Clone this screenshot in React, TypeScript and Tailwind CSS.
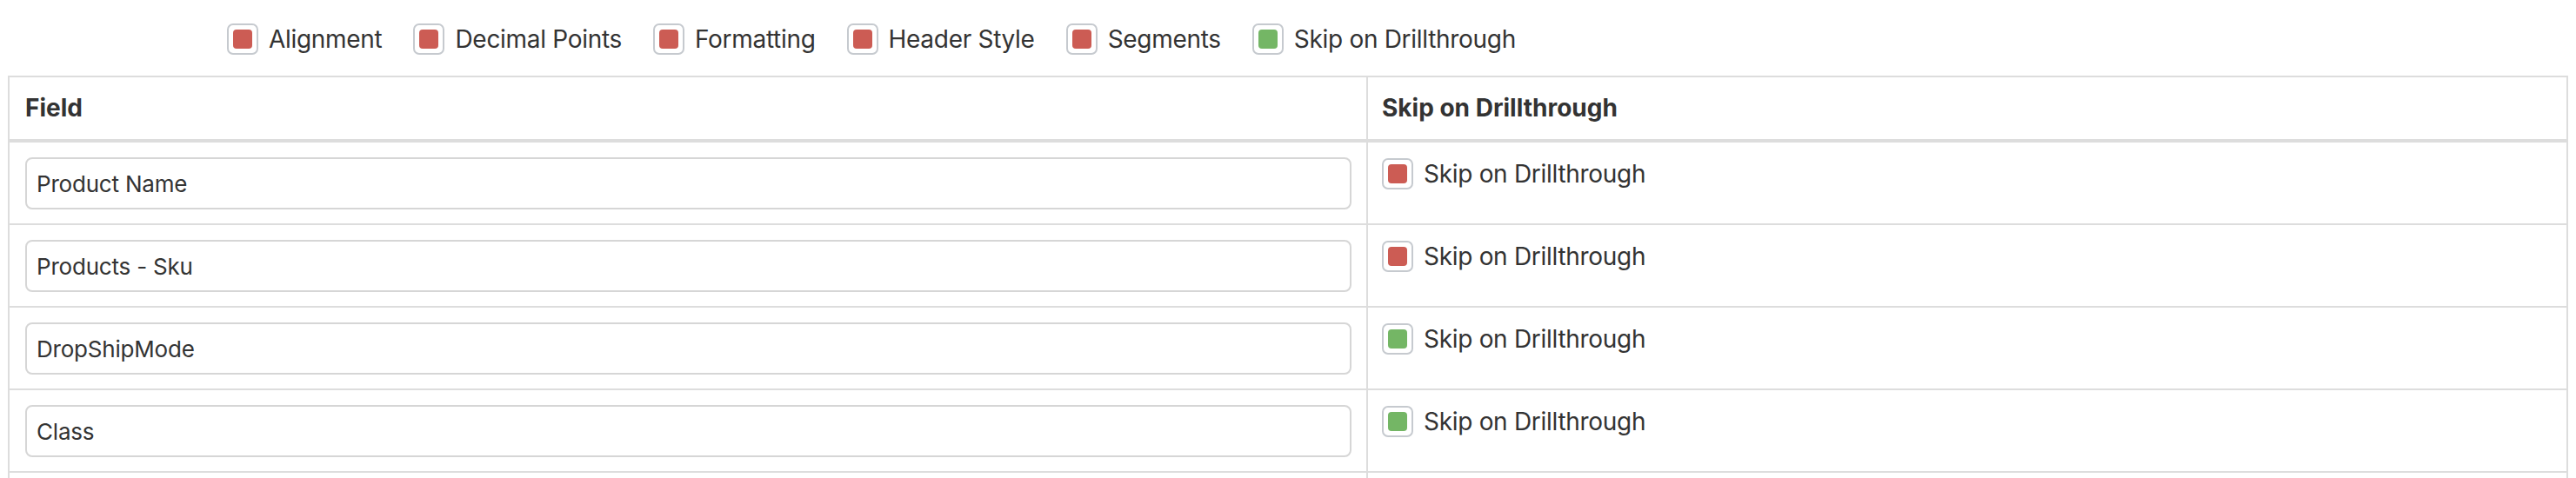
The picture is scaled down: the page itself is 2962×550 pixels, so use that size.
import React from 'react';

type Tone = 'red' | 'green';

const legend: { label: string; tone: Tone }[] = [
  { label: 'Alignment', tone: 'red' },
  { label: 'Decimal Points', tone: 'red' },
  { label: 'Formatting', tone: 'red' },
  { label: 'Header Style', tone: 'red' },
  { label: 'Segments', tone: 'red' },
  { label: 'Skip on Drillthrough', tone: 'green' },
];

const rows: { field: string; tone: Tone }[] = [
  { field: 'Product Name', tone: 'red' },
  { field: 'Products - Sku', tone: 'red' },
  { field: 'DropShipMode', tone: 'green' },
  { field: 'Class', tone: 'green' },
];

function Box({ tone }: { tone: Tone }) {
  return (
    <span className="flex h-[36px] w-[36px] shrink-0 items-center justify-center rounded-[7px] border-2 border-[#c6cacf] bg-white">
      <span className={`h-[22px] w-[22px] rounded-[4px] ${tone === 'red' ? 'bg-[#cc5c54]' : 'bg-[#74b665]'}`} />
    </span>
  );
}

export default function App() {
  return (
    <div className="h-[550px] overflow-hidden bg-white text-[#333333] font-['Inter','Noto_Sans',sans-serif]">
      <div className="flex h-[87px] items-start pl-[261px] pt-[27px]">
        {legend.map((l) => (
          <label key={l.label} className="mr-[36px] flex items-center gap-[12px] text-[28px] leading-[36px] tracking-[-0.3px]">
            <Box tone={l.tone} />
            {l.label}
          </label>
        ))}
      </div>

      <div className="mx-[9px] border-x-2 border-t-2 border-[#dddddd]">
        <div className="grid grid-cols-[1562px_1fr] border-b-4 border-[#dddddd]">
          <div className="border-r-2 border-[#dddddd] px-[18px] py-[18px] text-[28px] font-bold leading-[35px]">Field</div>
          <div className="px-[16px] py-[18px] text-[28px] font-bold leading-[35px]">Skip on Drillthrough</div>
        </div>
        {rows.map((r) => (
          <div key={r.field} className="grid grid-cols-[1562px_1fr] border-b-2 border-[#dddddd]">
            <div className="border-r-2 border-[#dddddd] pb-[16px] pl-[18px] pr-[17px] pt-[17px]">
              <div className="flex h-[60px] items-center rounded-[8px] border-2 border-[#d6d6d6] px-[11px] text-[26px] tracking-[-0.2px]">
                {r.field}
              </div>
            </div>
            <div className="px-[16px] pt-[18px]">
              <label className="flex items-center gap-[12px] text-[28px] leading-[36px] tracking-[-0.3px]">
                <Box tone={r.tone} />
                Skip on Drillthrough
              </label>
            </div>
          </div>
        ))}
        {/* next row, scrolled out of view */}
        <div className="grid h-[60px] grid-cols-[1562px_1fr]">
          <div className="border-r-2 border-[#dddddd]" />
          <div />
        </div>
      </div>
    </div>
  );
}
